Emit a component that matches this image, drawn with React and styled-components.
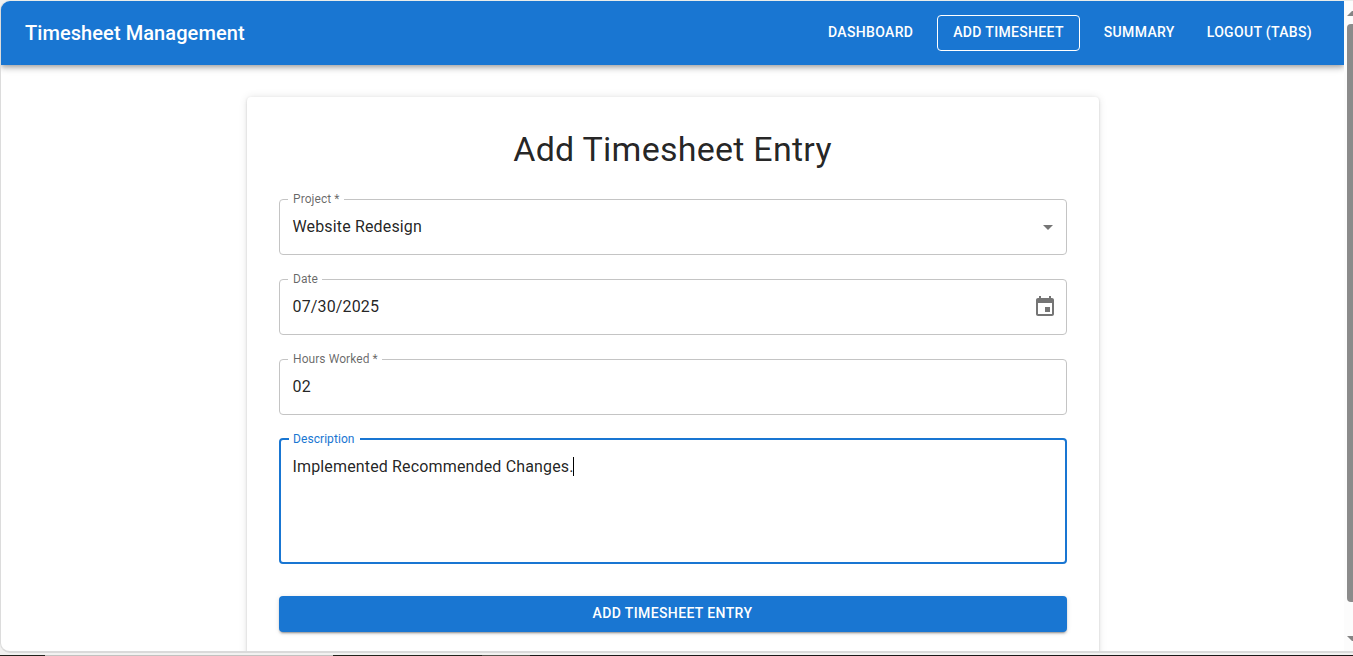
import React from "react";
import styled, { createGlobalStyle } from "styled-components";

const BLUE = "#1976d2";

const GlobalStyle = createGlobalStyle`
  *, *::before, *::after { box-sizing: border-box; }
  html, body { margin: 0; height: 100%; overflow: hidden; }
  body {
    background: #f2f2f1;
    color: rgba(0, 0, 0, 0.87);
    font-family: Roboto, "Liberation Sans", sans-serif;
  }
`;

const Screen = styled.div`
  display: flex;
  flex-direction: column;
  height: 656px;
  width: 1353px;
  overflow: hidden;
`;

const Window = styled.div`
  display: flex;
  height: 653px;
  border: 1px solid #dcdcdc;
  border-top-color: #e9ecea;
  border-right: 0;
  border-bottom: 2px solid #dadada;
  border-radius: 10px 0 0 10px;
  background: #fff;
  overflow: hidden;
`;

const Page = styled.div`
  width: 1343px;
  flex: none;
  display: flex;
  flex-direction: column;
  overflow: hidden;
`;

const AppBar = styled.header`
  display: flex;
  align-items: center;
  flex: none;
  height: 64px;
  padding: 0 24px;
  color: #fff;
  background: ${BLUE};
  box-shadow: 0 2px 4px -1px rgba(0, 0, 0, 0.2), 0 4px 5px 0 rgba(0, 0, 0, 0.14),
    0 1px 10px 0 rgba(0, 0, 0, 0.12);
`;

const Brand = styled.div`
  flex: 1;
  font-size: 20px;
  font-weight: 500;
  line-height: 1.6;
  letter-spacing: 0.08px;
`;

const Nav = styled.nav`
  display: flex;
  align-items: center;
  gap: 16px;
`;

const Button = styled.button`
  height: 36px;
  font: 500 14px/24px Roboto, "Liberation Sans", sans-serif;
  letter-spacing: 0.38px;
  text-transform: uppercase;
  color: #fff;
  border: 0;
  border-radius: 4px;
  background: transparent;
`;

const NavButton = styled(Button)`
  padding: ${(p) => (p.$active ? "4px 15px 6px" : "5px 8px 7px")};
  border: ${(p) => (p.$active ? "1px solid #fff" : "0")};
  letter-spacing: 0.33px;
`;

const SubmitButton = styled(Button)`
  width: 100%;
  flex: none;
  margin-top: 24px;
  padding: 5px 16px 7px;
  background: ${BLUE};
  box-shadow: 0 3px 1px -2px rgba(0, 0, 0, 0.2), 0 2px 2px 0 rgba(0, 0, 0, 0.14),
    0 1px 5px 0 rgba(0, 0, 0, 0.12);
`;

const Container = styled.main`
  width: 900px;
  margin: 32px auto 0;
  padding: 0 24px;
`;

const Card = styled.form`
  display: flex;
  flex-direction: column;
  height: 600px;
  padding: 31px 32px;
  border-radius: 4px;
  background: #fff;
  box-shadow: 0 2px 1px -1px rgba(0, 0, 0, 0.2), 0 1px 1px 0 rgba(0, 0, 0, 0.14),
    0 1px 3px 0 rgba(0, 0, 0, 0.12), 0 0 8px rgba(0, 0, 0, 0.1);
`;

const Title = styled.h1`
  margin: 0 0 13px;
  font-size: 34px;
  font-weight: 400;
  line-height: 42px;
  letter-spacing: 0.00735em;
  text-align: center;
`;

const Field = styled.div`
  position: relative;
  display: flex;
  flex: none;
  align-items: ${(p) => (p.$multiline ? "flex-start" : "center")};
  height: ${(p) => (p.$multiline ? 126 : 56)}px;
  margin: ${(p) => (p.$multiline ? 15 : 16)}px 0 8px;
  padding: ${(p) => (p.$focused ? "14.5px 12px" : "0 10px 0 13px")};
  border: ${(p) => (p.$focused ? `2px solid ${BLUE}` : "1px solid #c4c4c4")};
  border-radius: 4px;
`;

const Label = styled.label`
  position: absolute;
  top: -10px;
  left: 8px;
  padding: ${(p) => (p.$focused ? "0 5.5px 0 4.5px" : "0 4.5px 0 5.5px")};
  background: #fff;
  color: ${(p) => (p.$focused ? BLUE : "rgba(0, 0, 0, 0.6)")};
  font-size: 12px;
  line-height: 18px;
  letter-spacing: 0.07px;
`;

const Value = styled.span`
  padding-bottom: 2px;
  font-size: 16px;
  line-height: 23px;
  letter-spacing: 0.00938em;
`;

const Caret = styled.span`
  width: 1px;
  height: 19px;
  margin: 2px 0 0 -1px;
  background: #000;
`;

const Icon = styled.svg`
  width: 24px;
  height: 24px;
  margin-left: auto;
  margin-right: ${(p) => p.$right || 0}px;
  fill: rgba(0, 0, 0, 0.54);
`;

const Scrollbar = styled.div`
  flex: 1;
  display: flex;
  flex-direction: column;
  align-items: flex-end;
  padding: 10px 0 9px;
  background: #fcfcfc;
  overflow: hidden;
`;

const Thumb = styled.div`
  flex: none;
  width: 6px;
  height: 578px;
  margin: 8px 0 34px;
  border-radius: 4px 0 0 4px;
  background: #8b8b8b;
`;

const Arrow = styled.svg`
  flex: none;
  width: 6px;
  height: 5px;
  fill: #858585;
`;

const Taskbar = styled.div`
  display: flex;
  height: 1px;
  margin-top: 2px;
`;

const Segment = styled.div`
  flex: ${(p) => (p.$w ? `0 0 ${p.$w}px` : "1")};
  background: ${(p) => p.$color};
`;

const NAV = ["Dashboard", "Add Timesheet", "Summary", "Logout (Tabs)"];

function TextField({ label, value, icon, focused, multiline }) {
  return (
    <Field $focused={focused} $multiline={multiline}>
      <Label $focused={focused}>{label}</Label>
      <Value>{value}</Value>
      {focused && <Caret />}
      {icon}
    </Field>
  );
}

export default function App() {
  return (
    <Screen>
      <GlobalStyle />
      <Window>
        <Page>
          <AppBar>
            <Brand>Timesheet Management</Brand>
            <Nav>
              {NAV.map((item) => (
                <NavButton key={item} $active={item === "Add Timesheet"}>
                  {item}
                </NavButton>
              ))}
            </Nav>
          </AppBar>
          <Container>
            <Card>
              <Title>Add Timesheet Entry</Title>
              <TextField
                label="Project *"
                value="Website Redesign"
                icon={
                  <Icon viewBox="0 0 24 24" $right={-4.5}>
                    <path d="M7 10l5 5 5-5z" />
                  </Icon>
                }
              />
              <TextField
                label="Date"
                value="07/30/2025"
                icon={
                  <Icon viewBox="0 0 24 24" $right={-1.5}>
                    <path d="M17 12h-5v5h5v-5zM16 1v2H8V1H6v2H5c-1.11 0-1.99.9-1.99 2L3 19c0 1.1.89 2 2 2h14c1.1 0 2-.9 2-2V5c0-1.1-.9-2-2-2h-1V1h-2zm3 18H5V8h14v11z" />
                  </Icon>
                }
              />
              <TextField label="Hours Worked *" value="02" />
              <TextField
                label="Description"
                value="Implemented Recommended Changes."
                focused
                multiline
              />
              <SubmitButton type="button">Add Timesheet Entry</SubmitButton>
            </Card>
          </Container>
        </Page>
        <Scrollbar>
          <Arrow viewBox="0 0 6 5">
            <path d="M0 5L5 0L6 0V5z" />
          </Arrow>
          <Thumb />
          <Arrow viewBox="0 0 6 5">
            <path d="M0 0L5 5L6 5V0z" />
          </Arrow>
        </Scrollbar>
      </Window>
      <Taskbar>
        <Segment $w={45} $color="#22221c" />
        <Segment $w={288} $color="#c2c2c0" />
        <Segment $w={149} $color="#23231c" />
        <Segment $w={48} $color="#55554d" />
        <Segment $color="#1c1818" />
      </Taskbar>
    </Screen>
  );
}
